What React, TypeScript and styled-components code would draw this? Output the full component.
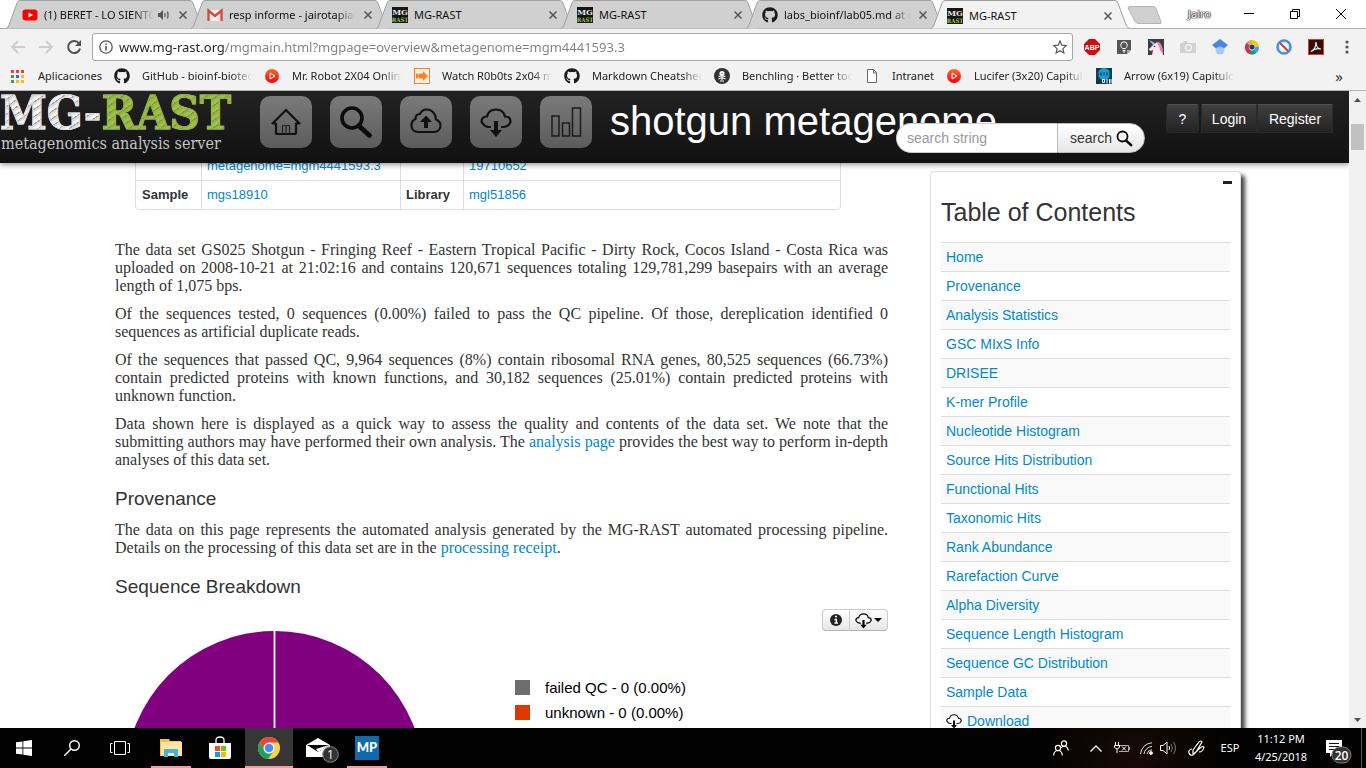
import React from "react";
import styled, { createGlobalStyle, css } from "styled-components";
import { FaGithub } from "react-icons/fa";

const ui = `"Noto Sans", "Open Sans", sans-serif`;
const arial = `"Liberation Sans", Arial, sans-serif`;
const times = `"Liberation Serif", "Times New Roman", serif`;

const GlobalStyle = createGlobalStyle`
  *, *::before, *::after { box-sizing: border-box; }
  body { margin: 0; background: #fff; overflow: hidden; }
  button { border: 0; padding: 0; margin: 0; background: none; font: inherit; color: inherit; }
  a { color: #08c; text-decoration: none; }
  svg { display: block; flex: none; }
`;

const Desktop = styled.div`
  display: flex;
  flex-direction: column;
  height: 100vh;
`;

/* ---------- tab strip ---------- */
const TabStrip = styled.div`
  display: flex;
  flex: none;
  height: 29px;
  padding-left: 6px;
  background: #fff;
  border-bottom: 1px solid #adadad;
`;
const TabBox = styled.div<{ $active?: boolean }>`
  position: relative;
  z-index: ${(p) => (p.$active ? 2 : 1)};
  flex: 0 0 185px;
  min-width: 0;
  height: ${(p) => (p.$active ? 29 : 28)}px;
  display: flex;
  align-items: center;
  padding: 2px 0 0 16px;
  font: 11px/16px ${ui};
  color: #111;
`;
const TabShape = styled.svg`
  position: absolute;
  left: 0;
  top: 0;
  z-index: -1;
`;
const Fade = styled.span<{ $w?: number }>`
  flex: ${(p) => (p.$w ? `0 0 ${p.$w}px` : "0 0 auto")};
  overflow: hidden;
  white-space: nowrap;
  ${(p) => p.$w && css`mask-image: linear-gradient(90deg, #000 calc(100% - 20px), transparent);`}
`;
const TabTitle = styled(Fade)`
  margin: 0 4px 0 6px;
`;
const TabClose = styled.button`
  width: 16px;
  height: 16px;
  margin-left: auto;
  display: grid;
  place-items: center;
`;
const NewTab = styled.button`
  margin: 6px 0 0 11px;
  height: 19px;
`;
const WindowControls = styled.div`
  display: flex;
  align-items: center;
  margin-left: auto;
  padding-right: 2px;
  height: 28px;
`;
const UserName = styled.button`
  font: 11px/16px ${ui};
  color: #fff;
  text-shadow: 0 0 1px #000, 0 0 1px #000, 0 0 2px #333;
  margin-right: 15px;
`;
const WinButton = styled.button`
  width: 46px;
  height: 28px;
  display: grid;
  place-items: center;
`;

/* ---------- toolbar ---------- */
const Toolbar = styled.div`
  display: flex;
  align-items: center;
  flex: none;
  height: 35px;
  padding: 0 4px;
  background: #f2f2f2;
`;
const IconButton = styled.button<{ $w?: number }>`
  flex: 0 0 ${(p) => p.$w ?? 28}px;
  height: 28px;
  display: grid;
  place-items: center;
`;
const Omnibox = styled.label`
  flex: 1;
  display: flex;
  align-items: center;
  height: 28px;
  margin: 0 3px 0 4px;
  padding: 0 5px 0 6px;
  gap: 6px;
  background: #fff;
  border: 1px solid #a6a6a6;
  border-radius: 3px;
`;
const UrlInput = styled.input`
  flex: 1;
  min-width: 0;
  border: 0;
  padding: 0;
  outline: 0;
  font: 13px/20px ${ui};
  color: transparent;
  background: linear-gradient(90deg, #222 106px, #808080 106px);
  background-clip: text;
`;

/* ---------- bookmarks ---------- */
const Bookmarks = styled.nav`
  display: flex;
  align-items: center;
  flex: none;
  height: 27px;
  padding: 0 23px 3px 10px;
  gap: 12px;
  background: #f2f2f2;
  border-bottom: 1px solid #b4b4b4;
`;
const Bookmark = styled.a`
  display: flex;
  align-items: center;
  gap: 12px;
  font: 11px/16px ${ui};
  color: #222;
`;
const More = styled.button`
  margin-left: auto;
  font: 15px/16px ${ui};
  color: #333;
`;

/* ---------- web page ---------- */
const Viewport = styled.div`
  flex: 1;
  min-height: 0;
  display: flex;
`;
const Page = styled.div`
  position: relative;
  flex: 1;
  min-width: 0;
  overflow: hidden;
  background: #fff;
`;
const Header = styled.header`
  position: absolute;
  inset: 0 0 auto 0;
  z-index: 5;
  display: flex;
  align-items: flex-start;
  height: 72px;
  background: linear-gradient(#222, #111);
  box-shadow: 0 1px 6px rgba(0, 0, 0, 0.5);
`;
const Logo = styled.a`
  flex: 0 0 260px;
  display: block;
  white-space: nowrap;
`;
const LogoWord = styled.span<{ $green?: boolean }>`
  font: bold 47px/44px "DejaVu Serif Condensed", "DejaVu Serif", serif;
  color: transparent;
  -webkit-text-stroke: 1px ${(p) => (p.$green ? "#93b545" : "#dcdcdc")};
  background: ${(p) =>
    p.$green
      ? "repeating-linear-gradient(145deg, #9fc04a 0 3px, #7c9939 3px 4px, #93b545 4px 6px)"
      : "repeating-linear-gradient(145deg, #f4f4f4 0 3px, #a4a4a4 3px 4px, #dcdcdc 4px 6px)"};
  background-clip: text;
`;
const LogoTag = styled.div`
  font: 16px/18px "DejaVu Serif Condensed", "DejaVu Serif", serif;
  color: #c4c4c4;
  padding-left: 1px;
`;
const MainNav = styled.nav`
  display: flex;
  gap: 18px;
  margin: 5px 18px 0 0;
`;
const NavButton = styled.button`
  width: 52px;
  height: 52px;
  display: grid;
  place-items: center;
  border-radius: 10px;
  background: linear-gradient(#7a7a7a, #5c5c5c);
`;
const PageTitle = styled.h1`
  flex: 1;
  min-width: 0;
  margin: 8px 0 0;
  font: 40px/44px ${arial};
  color: #fff;
  white-space: nowrap;
`;
const Search = styled.form`
  position: absolute;
  right: 204px;
  top: 32px;
  display: flex;
  height: 30px;
`;
const SearchInput = styled.input`
  width: 161px;
  padding: 0 10px;
  border: 1px solid #ccc;
  border-right: 0;
  border-radius: 15px 0 0 15px;
  background: #fff;
  outline: 0;
  font: 14px/20px ${arial};
  &::placeholder { color: #999; opacity: 1; }
`;
const SearchButton = styled.button`
  display: flex;
  align-items: center;
  gap: 4px;
  width: 88px;
  padding-left: 12px;
  border: 1px solid #bbb;
  border-radius: 0 15px 15px 0;
  background: linear-gradient(#fff, #e6e6e6);
  font: 14px/20px ${arial};
  color: #333;
`;
const Account = styled.div`
  display: flex;
  margin: 13px 16px 0 0;
`;
const AccountButton = styled.button<{ $w: number; $gap?: boolean }>`
  width: ${(p) => p.$w}px;
  height: 29px;
  margin-right: ${(p) => (p.$gap ? 2 : 0)}px;
  border: 1px solid #2a2a2a;
  border-top-color: #505050;
  border-radius: ${(p) => (p.$gap ? 3 : 1)}px;
  background: linear-gradient(#404040, #232323);
  font: 14px/20px ${arial};
  color: #fff;
`;
const Columns = styled.div`
  display: grid;
  grid-template-columns: minmax(0, 1fr) 311px;
  align-items: start;
  gap: 42px;
  padding: 0 108px 0 115px;
`;
const Article = styled.main`
  padding-top: 60px;
`;
const InfoTable = styled.table`
  width: calc(100% - 67px);
  margin: 0 47px 31px 20px;
  table-layout: fixed;
  border: 1px solid #ddd;
  border-radius: 4px;
  border-spacing: 0;
  font: 13px/20px ${arial};
  color: #333;
  th, td {
    padding: 4px 5px;
    height: 28px;
    text-align: left;
    border-left: 1px solid #ddd;
  }
  tr > :first-child { border-left: 0; padding-left: 6px; }
  tr + tr > * { border-top: 1px solid #ddd; height: 29px; }
`;
const Text = styled.p`
  margin: 0 0 10px;
  font: 16px/18px ${times};
  color: #333;
  text-align: justify;
`;
const Heading = styled.h4`
  margin: 20px 0 12px;
  font: 19px/20px ${arial};
  color: #333;
`;
const ChartTools = styled.div`
  display: flex;
  justify-content: flex-end;
`;
const ToolButton = styled.button<{ $w: number; $last?: boolean }>`
  display: flex;
  align-items: center;
  justify-content: center;
  gap: 2px;
  width: ${(p) => p.$w}px;
  height: 22px;
  border: 1px solid #ccc;
  border-bottom-color: #b3b3b3;
  border-left-width: ${(p) => (p.$last ? 0 : 1)}px;
  border-radius: ${(p) => (p.$last ? "0 4px 4px 0" : "4px 0 0 4px")};
  background: linear-gradient(#fff, #e6e6e6);
`;
const Chart = styled.figure`
  display: flex;
  gap: 90px;
  margin: 0 0 0 10px;
`;
const Legend = styled.ul`
  list-style: none;
  margin: 44px 0 0;
  padding: 0;
`;
const LegendItem = styled.li<{ $color: string }>`
  display: flex;
  align-items: center;
  gap: 15px;
  height: 25px;
  font: 15px/20px ${arial};
  color: #000;
  &::before {
    content: "";
    width: 15px;
    height: 15px;
    background: ${(p) => p.$color};
  }
`;
const Toc = styled.aside`
  margin-top: 80px;
  padding: 9px 10px;
  border: 1px solid #ddd;
  border-radius: 4px;
  background: #fff;
  box-shadow: 4px 4px 4px #444;
`;
const TocToggle = styled.button`
  display: block;
  width: 9px;
  height: 3px;
  margin: 0 -2px 0 auto;
  background: #222;
`;
const TocTitle = styled.h3`
  margin: 14px 0 16px;
  font: 25px/28px ${arial};
  color: #333;
`;
const TocList = styled.ul`
  list-style: none;
  margin: 0;
  padding: 0;
  font: 14px/20px ${arial};
`;
const TocItem = styled.li`
  padding: 4px 5px;
  border-top: 1px solid #ddd;
  &:nth-child(odd) { background: #f9f9f9; }
  a { display: flex; align-items: center; gap: 5px; }
`;
const Scrollbar = styled.div`
  flex: 0 0 17px;
  display: flex;
  flex-direction: column;
  align-items: center;
  justify-content: space-between;
  background: #f1f1f1;
`;
const ScrollTop = styled.div`
  display: grid;
  justify-items: center;
  gap: 16px;
`;
const ScrollThumb = styled.div`
  width: 13px;
  height: 26px;
  background: #c1c1c1;
`;
const ScrollArrow = styled.button`
  width: 17px;
  height: 17px;
  display: grid;
  place-items: center;
`;

/* ---------- taskbar ---------- */
const Taskbar = styled.footer`
  display: flex;
  flex: none;
  height: 40px;
  background: radial-gradient(ellipse 90px 60px at 83% 60%, #180a05, transparent), #020202;
  color: #fff;
`;
const TaskApps = styled.div`
  display: flex;
  gap: 1px;
  margin-left: 3px;
`;
const TaskButton = styled.button<{ $active?: boolean; $open?: boolean }>`
  position: relative;
  width: 48px;
  height: 40px;
  display: grid;
  place-items: center;
  background: ${(p) => (p.$active ? "#363636" : "none")};
  &::after {
    content: "";
    position: absolute;
    inset: auto ${(p) => (p.$active ? 0 : 4)}px 0;
    height: ${(p) => (p.$active || p.$open ? 2 : 0)}px;
    background: #f79a9f;
  }
`;
const Tray = styled.div`
  display: flex;
  align-items: center;
  margin-left: auto;
`;
const TrayButton = styled.button<{ $w: number }>`
  width: ${(p) => p.$w}px;
  height: 40px;
  display: grid;
  place-items: center;
  white-space: nowrap;
`;
const TrayText = styled.button<{ $w: number }>`
  width: ${(p) => p.$w}px;
  font: 11px/18px ${ui};
  text-align: center;
`;
const ShowDesktop = styled.button`
  width: 5px;
  height: 40px;
  border-left: 1px solid #555;
`;

/* ---------- icons ---------- */
const MgIcon = () => (
  <svg width="16" height="16" viewBox="0 0 16 16">
    <rect width="16" height="16" fill="#151515" />
    <text x="8" y="8" textAnchor="middle" fontFamily="DejaVu Serif" fontWeight="bold" fontSize="8" fill="#e8e8e8">MG</text>
    <text x="8" y="15" textAnchor="middle" fontFamily="DejaVu Serif Condensed" fontWeight="bold" fontSize="6" fill="#a4c84a">RAST</text>
  </svg>
);
const YoutubeIcon = () => (
  <svg width="16" height="16" viewBox="0 0 16 16">
    <rect x="0.5" y="2.5" width="15" height="11" rx="3" fill="#f00" />
    <path d="M6.4 5.4v5.2L11 8z" fill="#fff" />
  </svg>
);
const GmailIcon = () => (
  <svg width="16" height="16" viewBox="0 0 16 16">
    <path d="M1 3h14v11H1z" fill="#f3f0ef" />
    <path d="M1.5 14V3.5L8 9l6.500-5.500V14" fill="none" stroke="#d8453a" strokeWidth="2.300" />
    <path d="M3 13l4-4M13 13L9 9" stroke="#ccc" strokeWidth=".7" />
  </svg>
);
const AudioIcon = () => (
  <svg width="11" height="12" viewBox="0 0 11 12">
    <path d="M0 4h2l3-3v10L2 8H0z" fill="#555" />
    <path d="M7 4v4M9.500 2.500q1 3.500 0 7" stroke="#555" fill="none" strokeWidth="1.200" />
  </svg>
);
const Cross = () => (
  <svg width="8" height="8" viewBox="0 0 8 8">
    <path d="M.5.5l7 7M7.500.5l-7 7" stroke="#555" strokeWidth="1.500" />
  </svg>
);
const PlayIcon = () => (
  <svg width="16" height="16" viewBox="0 0 16 16">
    <defs>
      <linearGradient id="play" x2="0" y2="1"><stop stopColor="#ff6a1f" /><stop offset="1" stopColor="#f00018" /></linearGradient>
    </defs>
    <circle cx="8" cy="8" r="7" fill="url(#play)" />
    <path d="M6 5l5 3-5 3z" fill="none" stroke="#fff" strokeWidth="1" />
  </svg>
);
const AppsIcon = () => {
  const colors = ["#ea4335", "#ea4335", "#ea4335", "#34a853", "#1a73e8", "#fbbc05", "#34a853", "#fbbc05", "#fbbc05"];
  return (
    <svg width="16" height="16" viewBox="0 0 16 16">
      {colors.map((c, i) => <rect key={i} x={1 + (i % 3) * 5} y={2 + Math.floor(i / 3) * 5} width="3" height="3" fill={c} />)}
    </svg>
  );
};
const HandIcon = () => (
  <svg width="16" height="16" viewBox="0 0 16 16">
    <rect x=".5" y=".5" width="15" height="15" fill="#fff1e4" stroke="#ff7f27" />
    <path d="M2 5.500h2V7h1V5.500h4V3l5 5-5 5v-2.500H5V9H4v1.500H2z" fill="#ff7f27" />
  </svg>
);
const BenchlingIcon = () => (
  <svg width="16" height="16" viewBox="0 0 16 16">
    <circle cx="8" cy="8" r="8" fill="#333" />
    <circle cx="8" cy="5.500" r="2.600" fill="#fff" />
    <path d="M4.500 8l7 3M11.500 8l-7 3M8 8v4M6 13h4" stroke="#fff" strokeWidth="1.200" />
    <path d="M7 5.500h.5M8.500 5.500H9" stroke="#333" />
  </svg>
);
const PageIcon = () => (
  <svg width="16" height="16" viewBox="0 0 16 16">
    <path d="M3.500 1.500h6l3 3v10h-9zM9.500 1.500v3.500h3" fill="#fff" stroke="#666" />
  </svg>
);
const ArrowShowIcon = () => (
  <svg width="16" height="16" viewBox="0 0 16 16">
    <rect width="16" height="16" fill="#123a4a" />
    <circle cx="8" cy="6" r="6" fill="#159fd0" />
    <path d="M1 6h14" stroke="#075a7c" strokeWidth="3" strokeDasharray="2 1" />
    <path d="M6.500 11.500h2v3h-2zM11 11v4.500M13.500 11v4.500M15 11v4.500" stroke="#fff" fill="none" />
  </svg>
);

const cloudUp = "M8 26h16c4 0 6.500-3 6.500-6.500 0-3-2-5-4.500-6C25.500 7 21.500 3.500 17 3.500c-3.500 0-6 2-7 4.500-3 0-4.500 2-4.500 5C3 14 1.500 16.500 1.500 19.500 1.500 23 4 26 8 26z";
const cloudDown = "M11 21H8c-3-.5-4.500-2-6.500-5 0-3.500 2-5.500 5.500-5.500C8 6 11.500 3.500 16 3.500s8 2.500 9 7c3.500 0 5.500 2 5.500 5.500-1.500 3.500-3.500 5-6.500 5h-3";
const CloudDownload = ({ size, color = "#111" }: { size: number; color?: string }) => (
  <svg width={size} height={size} viewBox="0 0 32 32">
    <path d={cloudDown} fill="none" stroke={color} strokeWidth="2.200" />
    <path d="M14 15h4v9h4l-6 7-6-7h4z" fill={color} />
  </svg>
);
const Magnifier = ({ size }: { size: number }) => (
  <svg width={size} height={size} viewBox="0 0 34 34">
    <circle cx="13" cy="13" r="10" fill="none" stroke="#0c0c0c" strokeWidth="3.600" />
    <path d="M20 21l10.500 9.500" stroke="#0c0c0c" strokeWidth="4.800" strokeLinecap="round" />
  </svg>
);

const extensions: [string, React.ReactNode][] = [
  ["AdBlock Plus", <>
    <path d="M5 0h6l5 5v6l-5 5H5l-5-5V5z" fill="#d00b0b" />
    <text x="8" y="11" textAnchor="middle" fontFamily="Liberation Sans" fontWeight="bold" fontSize="7" fill="#fff">ABP</text>
  </>],
  ["Ideas", <>
    <path d="M1 1h14v10l-4 4H1z" fill="#555" />
    <path d="M11 15v-4h4z" fill="#aaa" />
    <path d="M6.500 9.500C5 8 4.800 7 4.800 6a3.200 3.200 0 016.400 0c0 1-.2 2-1.700 3.500zM6.500 11.500h3M7 13h2" fill="none" stroke="#fff" />
  </>],
  ["Unicorn", <>
    <rect width="16" height="16" fill="#3c3c42" />
    <path d="M4 16l1-5-3 1-1-2 5-5 4-2 4 5 1 8z" fill="#fbe9f2" />
    <path d="M8 3c4-1 7 3 7 12l-3-4-1-4z" fill="#f07aa8" />
    <path d="M1 1l6 3-2 2z" fill="#7fd0e8" />
    <circle cx="6.500" cy="7.500" r=".8" fill="#333" />
  </>],
  ["Camera", <>
    <path d="M0 4h3l1-2h3v2h9v10H0z" fill="#d0d0d0" />
    <circle cx="8.500" cy="8.800" r="3" fill="none" stroke="#f2f2f2" strokeWidth="1.500" />
  </>],
  ["Scholar", <>
    <circle cx="8" cy="11" r="4.500" fill="#a9c8f8" />
    <path d="M8 0l8 6-4 3.500a5 5 0 00-8 0L0 6z" fill="#4a86e8" />
  </>],
  ["Lens", <>
    <g fill="none" strokeWidth="4">
      <path d="M3 8a5 5 0 012-4" stroke="#8c3fb5" /><path d="M4 5a5 5 0 015-2" stroke="#f7a51c" />
      <path d="M8 3a5 5 0 015 5" stroke="#f5c518" /><path d="M13 8a5 5 0 01-3 5" stroke="#38a3e8" />
      <path d="M11 12.500a5 5 0 01-6 0" stroke="#1d9b6c" /><path d="M6 13a5 5 0 01-3-6" stroke="#e0284c" />
    </g>
    <circle cx="8" cy="8" r="2.600" fill="#1d3c72" />
  </>],
  ["Blocker", <>
    <circle cx="8" cy="8" r="6.500" fill="#fff" stroke="#4a90d9" strokeWidth="2.500" />
    <circle cx="8" cy="8" r="4.500" fill="none" stroke="#cfdff2" />
    <path d="M4 4l8 8" stroke="#d23b2f" strokeWidth="2" />
  </>],
  ["Acrobat", <>
    <rect x=".5" y=".5" width="15" height="15" fill="#2d0f0e" stroke="#e0391f" />
    <path d="M3 12.500c3-1.500 5-5 5-9.500 0 4 2 7 5 7-3-.8-7-.3-10 2.500z" fill="none" stroke="#fff" strokeWidth="1.200" />
  </>],
];

const tabs = [
  { title: "(1) BERET - LO SIENTO", icon: <YoutubeIcon />, w: 110, audio: true },
  { title: "resp informe - jairotapia@", icon: <GmailIcon />, w: 127 },
  { title: "MG-RAST", icon: <MgIcon /> },
  { title: "MG-RAST", icon: <MgIcon /> },
  { title: "labs_bioinf/lab05.md at master", icon: <FaGithub size={16} color="#1b1b1b" />, w: 127 },
  { title: "MG-RAST", icon: <MgIcon />, active: true },
];

const bookmarks = [
  { title: "Aplicaciones", icon: <AppsIcon /> },
  { title: "GitHub - bioinf-biotec", icon: <FaGithub size={16} color="#1b1b1b" />, w: 110 },
  { title: "Mr. Robot 2X04 Online", icon: <PlayIcon />, w: 110 },
  { title: "Watch R0b0ts 2x04 mo", icon: <HandIcon />, w: 110 },
  { title: "Markdown Cheatsheet", icon: <FaGithub size={16} color="#1b1b1b" />, w: 110 },
  { title: "Benchling · Better tools", icon: <BenchlingIcon />, w: 110 },
  { title: "Intranet", icon: <PageIcon /> },
  { title: "Lucifer (3x20) Capitulo", icon: <PlayIcon />, w: 110 },
  { title: "Arrow (6x19) Capitulo", icon: <ArrowShowIcon />, w: 110 },
];

const tocEntries = [
  "Home", "Provenance", "Analysis Statistics", "GSC MIxS Info", "DRISEE", "K-mer Profile",
  "Nucleotide Histogram", "Source Hits Distribution", "Functional Hits", "Taxonomic Hits",
  "Rank Abundance", "Rarefaction Curve", "Alpha Diversity", "Sequence Length Histogram",
  "Sequence GC Distribution", "Sample Data",
];

function BrowserChrome() {
  return (
    <>
      <TabStrip>
        {tabs.map((t, i) => (
          <TabBox key={i} $active={t.active}>
            <TabShape width="200" height="29" viewBox="0 0 200 29">
              <path
                d="M0 28.500Q2 28 3 25L11 3Q12 .5 14 .5H184Q186 .5 187 3L195 25Q196 28 199 28.500"
                fill={t.active ? "#f2f2f2" : "#d0d0d0"}
                stroke="#a0a0a0"
              />
            </TabShape>
            {t.icon}
            <TabTitle $w={t.w}>{t.title}</TabTitle>
            {t.audio && <AudioIcon />}
            <TabClose aria-label="Close tab"><Cross /></TabClose>
          </TabBox>
        ))}
        <NewTab aria-label="New tab">
          <svg width="36" height="19" viewBox="0 0 36 19">
            <path d="M3 .5h23q2 0 3 2l5 13q1 2-1 2H12q-3 0-4-2L1.500 3Q.5.500 3 .5z" fill="#d0d0d0" stroke="#b5b5b5" />
          </svg>
        </NewTab>
        <WindowControls>
          <UserName>Jairo</UserName>
          <WinButton aria-label="Minimize"><svg width="10" height="10"><path d="M0 4.500h10" stroke="#000" /></svg></WinButton>
          <WinButton aria-label="Restore">
            <svg width="10" height="10" fill="none" stroke="#000"><path d="M.5 2.500h7v7h-7zM2.500 2.500v-2h7v7h-2" /></svg>
          </WinButton>
          <WinButton aria-label="Close"><svg width="10" height="10" stroke="#000"><path d="M0 0l10 10M10 0L0 10" /></svg></WinButton>
        </WindowControls>
      </TabStrip>
      <Toolbar>
        <IconButton aria-label="Back">
          <svg width="16" height="16" fill="none" stroke="#cdcdcd" strokeWidth="2"><path d="M15 8H2M8 2L2 8l6 6" /></svg>
        </IconButton>
        <IconButton aria-label="Forward">
          <svg width="16" height="16" fill="none" stroke="#cdcdcd" strokeWidth="2"><path d="M1 8h13M8 2l6 6-6 6" /></svg>
        </IconButton>
        <IconButton aria-label="Reload">
          <svg width="16" height="16"><path d="M13 4.500A6 6 0 1014 9.500" fill="none" stroke="#505050" strokeWidth="2" /><path d="M15 1v6H9z" fill="#505050" /></svg>
        </IconButton>
        <Omnibox>
          <svg width="14" height="14" fill="none" stroke="#555" strokeWidth="1.300"><circle cx="7" cy="7" r="6.200" /><path d="M7 6v4.500M7 3.500V5" strokeWidth="1.600" /></svg>
          <UrlInput aria-label="Address" defaultValue="www.mg-rast.org/mgmain.html?mgpage=overview&metagenome=mgm4441593.3" />
          <svg width="14" height="14" viewBox="0 0 14 14"><path d="M7 1l1.800 4.200 4.500.4-3.400 3 1 4.400L7 10.700 3.100 13l1-4.400-3.400-3 4.500-.4z" fill="none" stroke="#555" strokeWidth="1.200" /></svg>
        </Omnibox>
        {extensions.map(([name, art]) => (
          <IconButton key={name} $w={32} aria-label={name}>
            <svg width="16" height="16" viewBox="0 0 16 16">{art}</svg>
          </IconButton>
        ))}
        <IconButton $w={30} aria-label="Menu">
          <svg width="4" height="14" fill="#555"><circle cx="2" cy="2" r="1.600" /><circle cx="2" cy="7" r="1.600" /><circle cx="2" cy="12" r="1.600" /></svg>
        </IconButton>
      </Toolbar>
      <Bookmarks>
        {bookmarks.map((b) => (
          <Bookmark key={b.title} href="#">
            {b.icon}
            <Fade $w={b.w}>{b.title}</Fade>
          </Bookmark>
        ))}
        <More aria-label="More bookmarks">»</More>
      </Bookmarks>
    </>
  );
}

function SiteHeader() {
  const outline = { fill: "none", stroke: "#111", strokeWidth: 2.2, strokeLinejoin: "round" as const };
  return (
    <Header>
      <Logo href="#">
        <LogoWord>MG-</LogoWord>
        <LogoWord $green>RAST</LogoWord>
        <LogoTag>metagenomics analysis server</LogoTag>
      </Logo>
      <MainNav>
        <NavButton aria-label="Home">
          <svg width="32" height="32" viewBox="0 0 32 32">
            <path d="M6 17.500H2.500L16 4l13.500 13.500H26V27q0 1-1 1H7q-1 0-1-1z" {...outline} />
            <path d="M12.500 28v-8.500h7V28M16 20v8" fill="none" stroke="#222" strokeWidth="1.200" />
          </svg>
        </NavButton>
        <NavButton aria-label="Search"><Magnifier size={34} /></NavButton>
        <NavButton aria-label="Upload">
          <svg width="32" height="32" viewBox="0 0 32 32">
            <path d={cloudUp} {...outline} />
            <path d="M14 22v-6h-4l6-6.500 6 6.500h-4v6z" fill="#111" />
          </svg>
        </NavButton>
        <NavButton aria-label="Download"><CloudDownload size={32} /></NavButton>
        <NavButton aria-label="Statistics">
          <svg width="32" height="32" viewBox="0 0 32 32" fill="none" stroke="#1c1c1c" strokeWidth="1.500">
            <path d="M2 10h7v20H2zM12.500 17h7v13h-7zM22.500 2h8v28h-8z" />
          </svg>
        </NavButton>
      </MainNav>
      <PageTitle>shotgun metagenome</PageTitle>
      <Account>
        <AccountButton $w={33} $gap>?</AccountButton>
        <AccountButton $w={56}>Login</AccountButton>
        <AccountButton $w={76}>Register</AccountButton>
      </Account>
      <Search onSubmit={(e) => e.preventDefault()}>
        <SearchInput aria-label="search string" placeholder="search string" />
        <SearchButton>search <Magnifier size={17} /></SearchButton>
      </Search>
    </Header>
  );
}

function Overview() {
  return (
    <Article>
      <InfoTable>
        <colgroup>
          <col width="65" /><col width="199" /><col width="63" /><col />
        </colgroup>
        <tbody>
          <tr>
            <th />
            <td><a href="#">metagenome=mgm4441593.3</a></td>
            <th />
            <td><a href="#">19710652</a></td>
          </tr>
          <tr>
            <th>Sample</th>
            <td><a href="#">mgs18910</a></td>
            <th>Library</th>
            <td><a href="#">mgl51856</a></td>
          </tr>
        </tbody>
      </InfoTable>
      <Text>
        The data set GS025 Shotgun - Fringing Reef - Eastern Tropical Pacific - Dirty Rock, Cocos Island - Costa
        Rica was uploaded on 2008-10-21 at 21:02:16 and contains 120,671 sequences totaling 129,781,299 basepairs
        with an average length of 1,075 bps.
      </Text>
      <Text>
        Of the sequences tested, 0 sequences (0.00%) failed to pass the QC pipeline. Of those, dereplication
        identified 0 sequences as artificial duplicate reads.
      </Text>
      <Text>
        Of the sequences that passed QC, 9,964 sequences (8%) contain ribosomal RNA genes, 80,525 sequences
        (66.73%) contain predicted proteins with known functions, and 30,182 sequences (25.01%) contain predicted
        proteins with unknown function.
      </Text>
      <Text>
        Data shown here is displayed as a quick way to assess the quality and contents of the data set. We note
        that the submitting authors may have performed their own analysis. The <a href="#">analysis page</a>{" "}
        provides the best way to perform in-depth analyses of this data set.
      </Text>
      <Heading>Provenance</Heading>
      <Text>
        The data on this page represents the automated analysis generated by the MG-RAST automated processing
        pipeline. Details on the processing of this data set are in the <a href="#">processing receipt</a>.
      </Text>
      <Heading>Sequence Breakdown</Heading>
      <ChartTools>
        <ToolButton $w={28} aria-label="Info">
          <svg width="12" height="12" viewBox="0 0 12 12">
            <circle cx="6" cy="6" r="6" fill="#222" />
            <path d="M5 2.500h2M4.500 5.500H6.300V9M4.500 9h3.500" stroke="#fff" strokeWidth="1.500" fill="none" />
          </svg>
        </ToolButton>
        <ToolButton $w={38} $last aria-label="Download chart">
          <CloudDownload size={17} color="#000" />
          <svg width="8" height="4"><path d="M0 0h8L4 4z" fill="#000" /></svg>
        </ToolButton>
      </ChartTools>
      <Chart>
        <svg width="300" height="300" viewBox="0 0 300 300">
          <circle cx="149.500" cy="149.500" r="149.500" fill="#800080" />
          <path d="M149.500 0v150" stroke="#fff" strokeWidth="1.800" />
        </svg>
        <Legend>
          <LegendItem $color="#6e6e6e">failed QC - 0 (0.00%)</LegendItem>
          <LegendItem $color="#dc3900">unknown - 0 (0.00%)</LegendItem>
        </Legend>
      </Chart>
    </Article>
  );
}

function Contents() {
  return (
    <Toc>
      <TocToggle aria-label="Collapse" />
      <TocTitle>Table of Contents</TocTitle>
      <TocList>
        {tocEntries.map((e) => (
          <TocItem key={e}><a href="#">{e}</a></TocItem>
        ))}
        <TocItem><a href="#"><CloudDownload size={16} />Download</a></TocItem>
      </TocList>
    </Toc>
  );
}

function WindowsTaskbar() {
  return (
    <Taskbar>
      <TaskButton aria-label="Start">
        <svg width="16" height="16" fill="#fff"><path d="M0 2.300L6.500 1.400V7.600H0zM7.300 1.300L16 0v7.600H7.300zM0 8.400h6.500v6.200L0 13.700zM7.300 8.400H16V16l-8.700-1.300z" /></svg>
      </TaskButton>
      <TaskButton aria-label="Search">
        <svg width="16" height="16" fill="none" stroke="#fff" strokeWidth="1.400"><circle cx="10.500" cy="5.500" r="4.800" /><path d="M7 9L0 16" /></svg>
      </TaskButton>
      <TaskButton aria-label="Task view">
        <svg width="20" height="14" fill="none" stroke="#fff"><path d="M4.500.5h11v13h-11zM2.500 2.500h-2v9h2M17.500 2.500h2v9h-2" /></svg>
      </TaskButton>
      <TaskApps>
        <TaskButton $open aria-label="File Explorer">
          <svg width="22" height="18" viewBox="0 0 22 18">
            <path d="M0 0h9l1 2h11v15H0z" fill="#f5c342" /><path d="M1 3h21v14H1z" fill="#ffe69a" />
            <path d="M4 18v-7q0-1 1-1h12q1 0 1 1v7h-4v-4H8v4z" fill="#3fb4e8" />
          </svg>
        </TaskButton>
        <TaskButton aria-label="Store">
          <svg width="24" height="24" viewBox="0 0 24 24">
            <path d="M1 7h22v14q0 2-2 2H3q-2 0-2-2z" fill="#fff" />
            <path d="M8 7V4q0-3 4-3t4 3v3" fill="none" stroke="#fff" strokeWidth="1.300" />
            <path d="M7 10h5v5H7z" fill="#f25022" /><path d="M13 10h5v5h-5z" fill="#7fba00" />
            <path d="M7 16h5v5H7z" fill="#00a4ef" /><path d="M13 16h5v5h-5z" fill="#ffb900" />
          </svg>
        </TaskButton>
        <TaskButton $active aria-label="Chrome">
          <svg width="22" height="22" viewBox="0 0 22 22">
            <circle cx="11" cy="11" r="11" fill="#fdd24a" />
            <path d="M1.500 5.500A11 11 0 0120.500 5.500H11L6.200 13.700z" fill="#dd4b3e" />
            <path d="M1.500 5.500A11 11 0 0010 22l5.800-8.300a5.500 5.500 0 01-9.600 0z" fill="#1aa260" />
            <circle cx="11" cy="11" r="5.500" fill="#fff" /><circle cx="11" cy="11" r="4.300" fill="#4a8af4" />
          </svg>
        </TaskButton>
        <TaskButton aria-label="Mail">
          <svg width="42" height="30" viewBox="-8 -2 42 30">
            <path d="M1 10l12-7 12 7v12H1z" fill="#fff" /><path d="M2 10h22l-11 7z" fill="#050505" />
            <path d="M13 17l-2-3 13-4z" fill="#fff" />
            <circle cx="25.500" cy="19.500" r="7.800" fill="#333" stroke="#888" />
            <text x="25.500" y="24" textAnchor="middle" fontFamily="Open Sans" fontSize="12" fill="#fff">1</text>
          </svg>
        </TaskButton>
        <TaskButton $open aria-label="MP">
          <svg width="24" height="24" viewBox="0 0 24 24">
            <rect width="24" height="24" fill="#0f69ad" />
            <text x="12" y="16" textAnchor="middle" fontFamily="Lato" fontWeight="900" fontSize="13" fill="#fff">MP</text>
          </svg>
        </TaskButton>
      </TaskApps>
      <Tray>
        <TrayButton $w={46} aria-label="People">
          <svg width="16" height="16" fill="none" stroke="#fff" strokeWidth="1.200"><circle cx="5" cy="8" r="2.600" /><path d="M.6 15.500q.4-5 4.400-5t4.400 5" /><circle cx="11" cy="3.500" r="2.600" /><path d="M8 7.500q6-3.500 7.400 3" /></svg>
        </TrayButton>
        <TrayButton $w={24} aria-label="Show hidden icons">
          <svg width="12" height="7" fill="none" stroke="#fff" strokeWidth="1.400"><path d="M.5 6.500L6 1l5.500 5.500" /></svg>
        </TrayButton>
        <TrayButton $w={28} aria-label="Battery">
          <svg width="17" height="12" fill="none" stroke="#fff"><path d="M5 3.500h9.500v6H5M15.500 5v3" stroke="#aaa" /><path d="M1.500 0v3M4.500 0v3M.5 3.500h5v2q-2.500 3-5 0zM3 7v4M8 4.500l4 4M12 4.500l-4 4" /></svg>
        </TrayButton>
        <TrayButton $w={22} aria-label="Network">
          <svg width="14" height="13" fill="none" stroke="#ddd"><path d="M.5 12A12 12 0 0112 .8M4 12a8.500 8.500 0 018-7.500M7 12a5.500 5.500 0 015-4.300" /><circle cx="11" cy="11" r="1.500" fill="#fff" /></svg>
        </TrayButton>
        <TrayButton $w={20} aria-label="Volume">
          <svg width="17" height="14" fill="none" stroke="#fff"><path d="M.5 4.500h2.500l4-3.500v12L3 9.500H.5z" /><path d="M9 5q1.200 2 0 4" /><path d="M11 3q3 4 0 8M13.500 1q4 6 0 12" stroke="#777" /></svg>
        </TrayButton>
        <TrayButton $w={36} aria-label="Pen">
          <svg width="17" height="16" fill="none" stroke="#fff" strokeWidth="1.200"><path d="M5 10L11 2q2-2 3 0L8 12l-3 2zM4 9q-4 1-3 4t4 2l7-7q2-2 4-1-1 5-5 5" /></svg>
        </TrayButton>
        <TrayText $w={32}>ESP</TrayText>
        <TrayText $w={70}>11:12 PM<br />4/25/2018</TrayText>
        <TrayButton $w={45} aria-label="Notifications">
          <svg width="28" height="34" viewBox="0 -8 28 34">
            <path d="M1 1h16v13H9l-4 4v-4H1z" fill="#fff" /><path d="M4 4.500h10M4 7.500h10M4 10.500h6" stroke="#111" />
            <rect x="7" y="8" width="19" height="16" rx="8" fill="#333" stroke="#777" />
            <text x="16.500" y="20.500" textAnchor="middle" fontFamily="Open Sans" fontWeight="600" fontSize="12" fill="#fff">20</text>
          </svg>
        </TrayButton>
        <ShowDesktop aria-label="Show desktop" />
      </Tray>
    </Taskbar>
  );
}

export default function App() {
  return (
    <Desktop>
      <GlobalStyle />
      <BrowserChrome />
      <Viewport>
        <Page>
          <SiteHeader />
          <Columns>
            <Overview />
            <Contents />
          </Columns>
        </Page>
        <Scrollbar>
          <ScrollTop>
            <ScrollArrow aria-label="Scroll up"><svg width="7" height="4"><path d="M0 4h7L3.500 0z" fill="#505050" /></svg></ScrollArrow>
            <ScrollThumb />
          </ScrollTop>
          <ScrollArrow aria-label="Scroll down"><svg width="7" height="4"><path d="M0 0h7L3.500 4z" fill="#505050" /></svg></ScrollArrow>
        </Scrollbar>
      </Viewport>
      <WindowsTaskbar />
    </Desktop>
  );
}
